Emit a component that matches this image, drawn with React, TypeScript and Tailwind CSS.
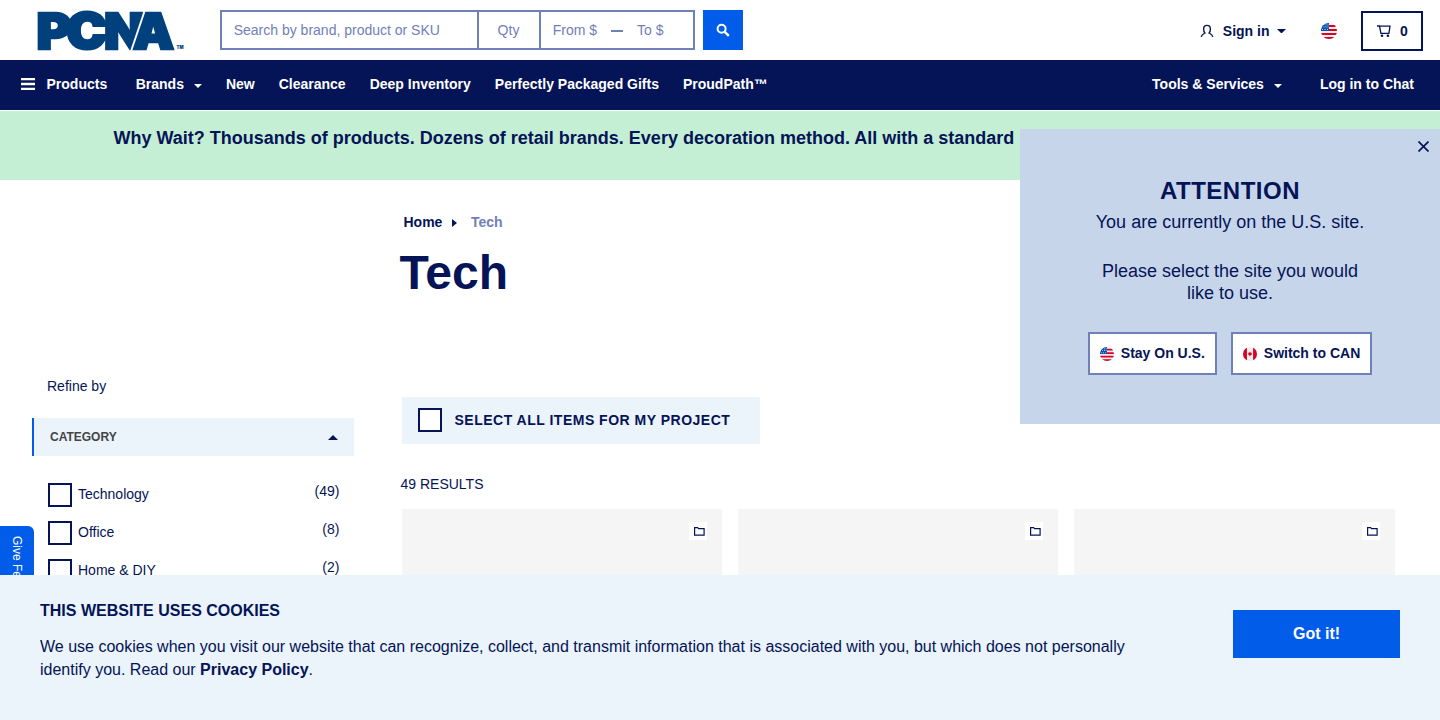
import React from 'react';

function Logo() {
  const letter = { fontFamily: 'Inter, "Liberation Sans", sans-serif', fontWeight: 900 } as const;
  return (
    <svg width="150" height="44" viewBox="0 0 150 44" role="img" aria-label="PCNA" fill="#00407c" className="block overflow-visible">
      <g style={letter} fontSize="49" stroke="#00407c">
        <text x="-0.500" y="38.500" textLength="35" lengthAdjust="spacingAndGlyphs" strokeWidth="2.500">P</text>
        <text x="67" y="38.500" textLength="40" lengthAdjust="spacingAndGlyphs" strokeWidth="2.500">N</text>
        <text x="29.500" y="38" textLength="40" lengthAdjust="spacingAndGlyphs" fontSize="48" strokeWidth="3">C</text>
        <text x="96" y="38.500" textLength="41" lengthAdjust="spacingAndGlyphs" stroke="#fff" strokeWidth="6">A</text>
        <text x="96" y="38.500" textLength="41" lengthAdjust="spacingAndGlyphs" strokeWidth="2.500">A</text>
      </g>
      <text x="139.500" y="39" fontSize="4.500" style={letter} textLength="7" lengthAdjust="spacingAndGlyphs">TM</text>
    </svg>
  );
}

function UsFlag({ className }: { className: string }) {
  return (
    <svg viewBox="0 0 16 16" className={className}>
      <clipPath id="us-disc"><circle cx="8" cy="8" r="8" /></clipPath>
      <g clipPath="url(#us-disc)">
        <rect width="16" height="16" fill="#eeeeee" />
        <path d="M0 2h16v2H0zM0 6h16v2H0zM0 10h16v2H0zM0 14h16v2H0z" fill="#d80027" />
        <rect width="8" height="8" fill="#0052b4" />
        <path d="M4.500 1.500h1v1h-1zM6.500 1.500h1v1h-1zM2.500 3.500h1v1h-1zM4.500 3.500h1v1h-1zM6.500 3.500h1v1h-1zM1 6h1v1H1zM3.500 6h1v1h-1zM6 6h1v1H6z" fill="#c5d7ee" />
      </g>
    </svg>
  );
}

function CaFlag({ className }: { className: string }) {
  return (
    <svg viewBox="0 0 16 16" className={className}>
      <clipPath id="ca-disc"><circle cx="8" cy="8" r="8" /></clipPath>
      <g clipPath="url(#ca-disc)">
        <rect width="16" height="16" fill="#eeeeee" />
        <path d="M0 0h4.500v16H0zM11.500 0H16v16h-4.500z" fill="#d80027" />
        <path d="M8 5.200l.8 1.300.9-.3-.1 1.200 1-.1-.6 1.200-1.600 1.100v1h-.8v-1L6 8.500l-.6-1.200 1 .1-.1-1.200.9.300z" fill="#d80027" />
      </g>
    </svg>
  );
}

function Caret({ className }: { className: string }) {
  return (
    <svg viewBox="0 0 10 5" preserveAspectRatio="none" className={className} fill="currentColor">
      <path d="M0 0h10L5 5z" />
    </svg>
  );
}

function Header() {
  return (
    <header className="flex h-[60px] items-start">
      <div className="ml-[37px] mt-[10px] w-[183px]"><Logo /></div>
      <div className="mt-[10px] flex h-10 w-[475px] border-2 border-[#7080b8] text-sm leading-9 text-[#7080b8]">
        <div className="w-[257px] border-r-2 border-[#7080b8] pl-[11.700px]">Search by brand, product or SKU</div>
        <div className="w-[62px] border-r-2 border-[#7080b8] pr-px text-center">Qty</div>
        <div className="flex items-center pl-[11.700px]">
          <span>From $</span>
          <span className="mx-[14px] mt-0.5 h-0.5 w-3 bg-[#7080b8]" />
          <span>To $</span>
        </div>
      </div>
      <button className="ml-2 mt-[10px] flex h-10 w-10 items-center justify-center bg-[#005ce9] text-white">
        <svg width="14" height="14" viewBox="0 0 14 14" fill="none" stroke="currentColor" strokeWidth="2">
          <circle cx="5.600" cy="5.700" r="4" />
          <path d="M8.500 8.600l4.300 4.300" strokeWidth="2.300" />
        </svg>
      </button>
      <div className="ml-auto mr-[17px] mt-[11px] flex h-10 items-center text-sm font-bold">
        <svg width="14" height="14" viewBox="0 0 14 14" fill="none" stroke="currentColor" strokeWidth="1.400" className="mr-[9px]">
          <path d="M1.200 12.800c.3-2 1.800-2.700 3.700-3.800C3.700 7.900 3.600 6.500 3.600 5c0-2.300 1.300-3.600 3.400-3.600S10.400 2.700 10.400 5c0 1.500-.1 2.900-1.300 4 1.900 1.100 3.400 1.800 3.700 3.800" />
        </svg>
        <span>Sign in</span>
        <Caret className="ml-[7px] mr-[35.500px] h-[4.500px] w-[9px]" />
        <UsFlag className="mr-6 h-4 w-4" />
        <div className="flex h-10 w-[62px] items-center border-2 border-[#041456] pl-[14px]">
          <svg width="14" height="12" viewBox="0 0 14 12" fill="none" stroke="currentColor" strokeWidth="1.300" className="mr-[9px]">
            <path d="M0 1h2.500l1.400 7.300h8L13 1.200H2.700" />
            <circle cx="5" cy="10.700" r="1.300" fill="currentColor" stroke="none" />
            <circle cx="10.900" cy="10.700" r="1.300" fill="currentColor" stroke="none" />
          </svg>
          <span>0</span>
        </div>
      </div>
    </header>
  );
}

function NavBar() {
  return (
    <nav className="flex h-[50px] items-center bg-[#041456] pb-0.5 text-sm font-bold text-white">
      <svg width="14" height="12" viewBox="0 0 14 12" fill="currentColor" className="ml-[21px] mr-[11.500px]">
        <path d="M0 0h14v2.300H0zM0 4.800h14v2.400H0zM0 9.700h14V12H0z" />
      </svg>
      <span className="mr-[28.500px]">Products</span>
      <span>Brands</span>
      <Caret className="ml-[10px] mr-6 mt-[3px] h-[4px] w-2" />
      <div className="flex gap-6">
        <span>New</span>
        <span>Clearance</span>
        <span>Deep Inventory</span>
        <span>Perfectly Packaged Gifts</span>
        <span>ProudPath™</span>
      </div>
      <span className="ml-auto">Tools &amp; Services</span>
      <Caret className="ml-[10px] mr-[38px] mt-[3px] h-[4px] w-2" />
      <span className="mr-[26px]">Log in to Chat</span>
    </nav>
  );
}

const categories = [
  { name: 'Technology', count: 49 },
  { name: 'Office', count: 8 },
  { name: 'Home & DIY', count: 2 },
];

function Sidebar() {
  return (
    <aside className="ml-8 w-[322px] pt-[196px]">
      <p className="pl-[15px] text-sm leading-5">Refine by</p>
      <div className="mt-[22px] flex h-[38px] items-center justify-between border-l-2 border-[#005ce9] bg-[#ebf3fb] pl-4 pr-4 text-xs font-bold">
        <span className="text-[#444]">CATEGORY</span>
        <svg width="10" height="5" viewBox="0 0 10 5" fill="currentColor"><path d="M0 5h10L5 0z" /></svg>
      </div>
      <ul className="mt-[27px] flex flex-col gap-[14px] pl-4 pr-[14.500px] text-sm">
        {categories.map((c) => (
          <li key={c.name} className="flex h-6 items-start">
            <span className="mr-1.5 h-6 w-6 border-2 border-[#041456]" />
            <span className="leading-[23px]">{c.name}</span>
            <span className="ml-auto leading-[17px]">({c.count})</span>
          </li>
        ))}
      </ul>
    </aside>
  );
}

function ProductCard() {
  return (
    <div className="flex h-[200px] items-start justify-end bg-[#f5f5f5] pr-[15px] pt-[13px]">
      <span className="flex h-[18px] w-[18px] items-center justify-end bg-white pr-0.5">
        <svg width="11" height="9" viewBox="0 0 11 9" fill="none" stroke="currentColor" strokeWidth="1.200">
          <path d="M.6.600h3l1 1h5.500v6.500H.6z" />
        </svg>
      </span>
    </div>
  );
}

function Results() {
  return (
    <main className="ml-[47.500px] w-[993px]">
      <div className="flex items-center pl-0.5 pt-8 text-sm font-bold leading-5">
        <span>Home</span>
        <svg width="5" height="8" viewBox="0 0 5 8" fill="currentColor" className="ml-[9.500px] mr-[14px] mt-px"><path d="M0 0l5 4-5 4z" /></svg>
        <span className="text-[#7080b8]">Tech</span>
      </div>
      <h1 className="-ml-0.5 mt-[13px] text-5xl font-bold leading-[56px]">Tech</h1>
      <div className="mt-24 flex h-[47px] w-[358px] items-center bg-[#ebf3fb] pl-4">
        <span className="-mt-px mr-[13px] h-6 w-6 border-2 border-[#041456] bg-white" />
        <span className="-mt-0.5 text-sm font-bold tracking-[0.5px]">SELECT ALL ITEMS FOR MY PROJECT</span>
      </div>
      <p className="-ml-px mt-[30px] text-sm leading-5">49 RESULTS</p>
      <div className="mt-[15px] grid grid-cols-3 gap-4">
        <ProductCard />
        <ProductCard />
        <ProductCard />
      </div>
    </main>
  );
}

function SiteNotice() {
  return (
    <section className="absolute right-0 top-[129px] flex h-[295px] w-[420px] flex-col items-center bg-[#c7d5eb] text-center">
      <svg width="11" height="11" viewBox="0 0 11 11" fill="none" stroke="currentColor" strokeWidth="1.700" className="mr-[11.500px] mt-3 self-end">
        <path d="M.5.500l10 10M10.500.500l-10 10" />
      </svg>
      <h2 className="mt-[23px] text-2xl font-bold leading-8 tracking-[0.5px]">ATTENTION</h2>
      <p className="mt-1 text-lg leading-[22px]">You are currently on the U.S. site.</p>
      <p className="mt-[27px] w-[270px] text-lg leading-[22px]">Please select the site you would like to use.</p>
      <div className="mt-[28px] flex gap-[14px] text-sm font-bold">
        <button className="flex h-[43px] w-[129px] items-center border-2 border-[#7080b8] bg-white pb-0.5 pl-[10px]">
          <UsFlag className="mr-[6.800px] mt-0.5 h-[14px] w-[14px]" />
          <span className="whitespace-nowrap">Stay On U.S.</span>
        </button>
        <button className="flex h-[43px] w-[141px] items-center border-2 border-[#7080b8] bg-white pb-0.5 pl-[10px]">
          <CaFlag className="mr-[6.800px] mt-0.5 h-[14px] w-[14px]" />
          <span className="whitespace-nowrap">Switch to CAN</span>
        </button>
      </div>
    </section>
  );
}

function CookieBar() {
  return (
    <section className="absolute inset-x-0 bottom-0 flex h-[145px] justify-between bg-[#ebf3fb] px-10">
      <div className="pt-6">
        <h3 className="text-base font-bold leading-6">THIS WEBSITE USES COOKIES</h3>
        <p className="mt-3 w-[1120px] text-base leading-[23px]">
          We use cookies when you visit our website that can recognize, collect, and transmit information that is associated with you, but which does not personally identify you. Read our <b>Privacy Policy</b>.
        </p>
      </div>
      <button className="mt-[35px] h-12 w-[167px] bg-[#005ce9] text-base font-bold text-white">Got it!</button>
    </section>
  );
}

export default function App() {
  return (
    <div className="relative h-[720px] w-[1440px] overflow-hidden bg-white font-['Liberation_Sans',Arial,sans-serif] text-[#041456]">
      <Header />
      <NavBar />
      <div className="mt-px h-[69px] bg-[#c5efd4] pl-[113.500px] pt-[13px] text-lg font-bold leading-7">
        Why Wait? Thousands of products. Dozens of retail brands. Every decoration method. All with a standard
      </div>
      <div className="flex items-start">
        <Sidebar />
        <Results />
      </div>
      <div className="absolute left-0 top-[526px] h-[120px] w-[34px] rounded-r-md bg-[#005ce9] pt-[10px] text-xs leading-[34px] text-white [writing-mode:vertical-rl]">
        Give Feedback
      </div>
      <SiteNotice />
      <CookieBar />
    </div>
  );
}
